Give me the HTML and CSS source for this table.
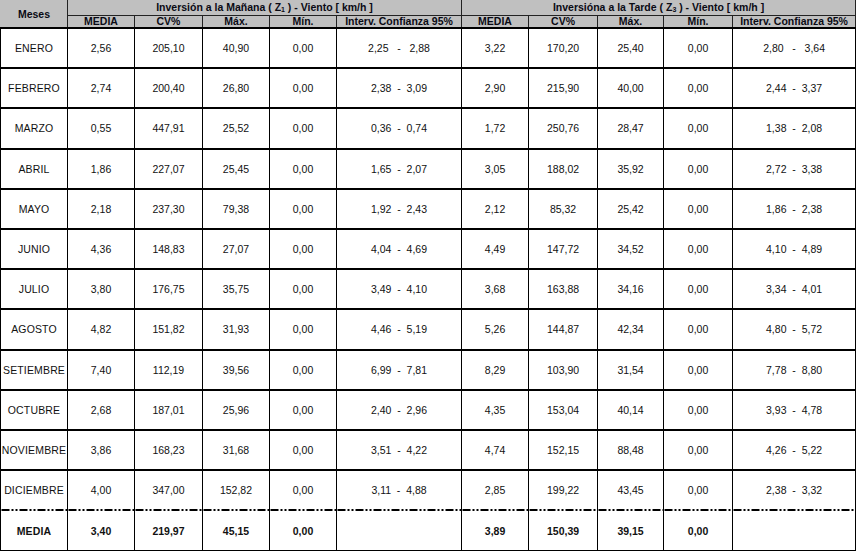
FILE: index.html
```html
<!DOCTYPE html>
<html lang="es">
<head>
<meta charset="utf-8">
<link rel="stylesheet" href="styles.css">
</head>
<body>
<table class="tbl">
  <colgroup>
    <col class="c-mes"><col class="c-med"><col class="c-cv"><col class="c-max"><col class="c-min"><col class="c-int">
    <col class="c-med2"><col class="c-cv2"><col class="c-max2"><col class="c-min2"><col class="c-int2">
  </colgroup>
  <thead>
    <tr class="h1">
      <th rowspan="2" class="mes-h">Meses</th>
      <th colspan="5">Inversión a la Mañana ( Z<sub>1</sub> ) - Viento [ km/h ]</th>
      <th colspan="5">Inversióna a la Tarde ( Z<sub>3</sub> ) - Viento [ km/h ]</th>
    </tr>
    <tr class="h2">
      <th>MEDIA</th><th>CV%</th><th>Máx.</th><th>Mín.</th><th>Interv. Confianza 95%</th>
      <th>MEDIA</th><th>CV%</th><th>Máx.</th><th>Mín.</th><th>Interv. Confianza 95%</th>
    </tr>
  </thead>
  <tbody>
    <tr><td class="mes">ENERO</td><td>2,56</td><td>205,10</td><td>40,90</td><td>0,00</td><td class="iv">2,25   -   2,88</td><td class="sep">3,22</td><td>170,20</td><td>25,40</td><td>0,00</td><td class="iv">2,80   -   3,64</td></tr>
    <tr><td class="mes">FEBRERO</td><td>2,74</td><td>200,40</td><td>26,80</td><td>0,00</td><td class="iv">2,38  -  3,09</td><td class="sep">2,90</td><td>215,90</td><td>40,00</td><td>0,00</td><td class="iv">2,44  -  3,37</td></tr>
    <tr><td class="mes">MARZO</td><td>0,55</td><td>447,91</td><td>25,52</td><td>0,00</td><td class="iv">0,36  -  0,74</td><td class="sep">1,72</td><td>250,76</td><td>28,47</td><td>0,00</td><td class="iv">1,38  -  2,08</td></tr>
    <tr><td class="mes">ABRIL</td><td>1,86</td><td>227,07</td><td>25,45</td><td>0,00</td><td class="iv">1,65  -  2,07</td><td class="sep">3,05</td><td>188,02</td><td>35,92</td><td>0,00</td><td class="iv">2,72  -  3,38</td></tr>
    <tr><td class="mes">MAYO</td><td>2,18</td><td>237,30</td><td>79,38</td><td>0,00</td><td class="iv">1,92  -  2,43</td><td class="sep">2,12</td><td>85,32</td><td>25,42</td><td>0,00</td><td class="iv">1,86  -  2,38</td></tr>
    <tr><td class="mes">JUNIO</td><td>4,36</td><td>148,83</td><td>27,07</td><td>0,00</td><td class="iv">4,04  -  4,69</td><td class="sep">4,49</td><td>147,72</td><td>34,52</td><td>0,00</td><td class="iv">4,10  -  4,89</td></tr>
    <tr><td class="mes">JULIO</td><td>3,80</td><td>176,75</td><td>35,75</td><td>0,00</td><td class="iv">3,49  -  4,10</td><td class="sep">3,68</td><td>163,88</td><td>34,16</td><td>0,00</td><td class="iv">3,34  -  4,01</td></tr>
    <tr><td class="mes">AGOSTO</td><td>4,82</td><td>151,82</td><td>31,93</td><td>0,00</td><td class="iv">4,46  -  5,19</td><td class="sep">5,26</td><td>144,87</td><td>42,34</td><td>0,00</td><td class="iv">4,80  -  5,72</td></tr>
    <tr><td class="mes">SETIEMBRE</td><td>7,40</td><td>112,19</td><td>39,56</td><td>0,00</td><td class="iv">6,99  -  7,81</td><td class="sep">8,29</td><td>103,90</td><td>31,54</td><td>0,00</td><td class="iv">7,78  -  8,80</td></tr>
    <tr><td class="mes">OCTUBRE</td><td>2,68</td><td>187,01</td><td>25,96</td><td>0,00</td><td class="iv">2,40  -  2,96</td><td class="sep">4,35</td><td>153,04</td><td>40,14</td><td>0,00</td><td class="iv">3,93  -  4,78</td></tr>
    <tr><td class="mes">NOVIEMBRE</td><td>3,86</td><td>168,23</td><td>31,68</td><td>0,00</td><td class="iv">3,51  -  4,22</td><td class="sep">4,74</td><td>152,15</td><td>88,48</td><td>0,00</td><td class="iv">4,26  -  5,22</td></tr>
    <tr class="last"><td class="mes">DICIEMBRE</td><td>4,00</td><td>347,00</td><td>152,82</td><td>0,00</td><td class="iv">3,11  -  4,88</td><td class="sep">2,85</td><td>199,22</td><td>43,45</td><td>0,00</td><td class="iv">2,38  -  3,32</td></tr>
    <tr class="total"><td class="mes">MEDIA</td><td>3,40</td><td>219,97</td><td>45,15</td><td>0,00</td><td></td><td class="sep">3,89</td><td>150,39</td><td>39,15</td><td>0,00</td><td></td></tr>
  </tbody>
</table>
</body>
</html>
```

FILE: styles.css
```css
html, body {
  margin: 0;
  padding: 0;
  background: #ffffff;
}

.tbl {
  border-collapse: collapse;
  table-layout: fixed;
  width: 855px;
  font-family: "Liberation Sans", Arial, sans-serif;
  font-size: 10.5px;
  color: #111;
}

.c-mes { width: 67px; }
.c-med { width: 67px; }
.c-cv { width: 68px; }
.c-max { width: 67px; }
.c-min { width: 67px; }
.c-int { width: 125px; }
.c-med2 { width: 67px; }
.c-cv2 { width: 69px; }
.c-max2 { width: 66px; }
.c-min2 { width: 69px; }
.c-int2 { width: 123px; }

.tbl th {
  background: #c0c0c0;
  font-weight: bold;
  padding: 0;
  line-height: 11px;
  border: 1px solid #222;
  border-top: none;
  color: #0a0a14;
}

.tbl th.mes-h {
  border-left: 1px solid #c0c0c0;
  padding-top: 1px;
}

.h1 th { height: 15px; }
.h2 th { height: 11px; }

.tbl th sub {
  font-size: 7px;
  vertical-align: -1px;
  line-height: 0;
}

.tbl td {
  height: 38.2px;
  padding: 0;
  text-align: center;
  border-left: 1px solid #000;
  border-right: 1px solid #000;
  border-top: 2px solid #000;
  border-bottom: 2px solid #000;
}

.tbl td.mes {
  letter-spacing: 0.15px;
  white-space: nowrap;
}

.tbl td.iv {
  white-space: pre;
}

.tbl td.sep {
  border-left: 1px dashed #000;
}

.tbl tr.last td {
  border-bottom: none;
}

.tbl tr.total td {
  border-top: none;
  border-bottom: 1px solid #000;
  height: 38px;
  padding-top: 3px;
  font-weight: bold;
  background-image: linear-gradient(to right, #000 0 8px, transparent 8px 10px, #000 10px 12px, transparent 12px 14px, #000 14px 16px, transparent 16px 18px);
  background-size: 18px 2px;
  background-repeat: repeat-x;
  background-position: 0 0;
}
```
